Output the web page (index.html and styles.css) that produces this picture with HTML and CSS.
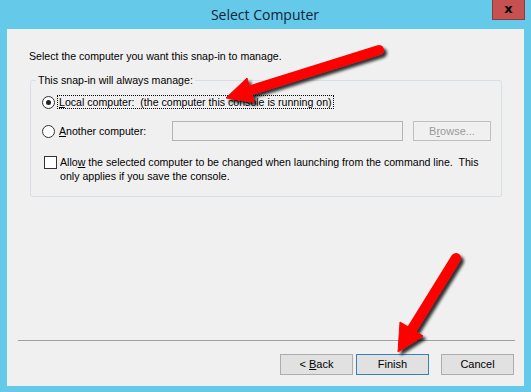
FILE: index.html
```html
<!DOCTYPE html>
<html lang="en">
<head>
    <meta charset="UTF-8">
    <title>Select Computer</title>
    <link rel="stylesheet" href="styles.css">
</head>
<body>
    <div class="window">
        <div class="titlebar">
            <div class="title">Select Computer</div>
            <div class="close">x</div>
        </div>

        <div class="client">
            <p class="intro">Select the computer you want this snap-in to manage.</p>

            <fieldset class="group">
                <legend>This snap-in will always manage:</legend>

                <div class="row row-local">
                    <span class="radio checked"></span>
                    <span class="focus"><u>L</u>ocal computer:&nbsp; (the computer this console is running on)</span>
                </div>

                <div class="row row-other">
                    <span class="radio"></span>
                    <span class="label"><u>A</u>nother computer:</span>
                    <span class="textbox"></span>
                    <span class="btn btn-disabled">B<u>r</u>owse...</span>
                </div>

                <div class="row row-check">
                    <span class="checkbox"></span>
                    <span class="check-text">Allo<u>w</u> the selected computer to be changed when launching from the command line.&nbsp; This<br>only applies if you save the console.</span>
                </div>
            </fieldset>

            <div class="footer">
                <div class="separator"></div>
                <div class="buttons">
                    <span class="btn">&lt; <u>B</u>ack</span>
                    <span class="btn btn-default">Finish</span>
                    <span class="btn btn-cancel">Cancel</span>
                </div>
            </div>
        </div>

        <!-- red arrows drawn over the dialog -->
        <svg class="arrows" width="531" height="392" viewBox="0 0 531 392">
            <defs>
                <filter id="shadow" x="-20%" y="-20%" width="140%" height="140%">
                    <feGaussianBlur in="SourceAlpha" stdDeviation="1.6"/>
                    <feOffset dx="3" dy="3" result="blur"/>
                    <feComponentTransfer><feFuncA type="linear" slope="0.8"/></feComponentTransfer>
                    <feMerge>
                        <feMergeNode/>
                        <feMergeNode in="SourceGraphic"/>
                    </feMerge>
                </filter>
            </defs>
            <g filter="url(#shadow)" fill="#ff0000" stroke="#ff0000">
                <line x1="379" y1="50" x2="248" y2="91" stroke-width="10" stroke-linecap="round"/>
                <polygon points="226,98 247,78 254,102" stroke-width="1" stroke-linejoin="round"/>
                <line x1="456" y1="258" x2="412" y2="329" stroke-width="10" stroke-linecap="round"/>
                <polygon points="398,352 400,322 423,336" stroke-width="1" stroke-linejoin="round"/>
            </g>
        </svg>
    </div>
</body>
</html>
```

FILE: styles.css
```css
body {
    margin: 0;
    padding: 0;
    background: #65c9ea;
    font-family: "Liberation Sans", Arial, sans-serif;
    font-size: 10.6px;
    color: #000;
}

.window {
    position: relative;
    width: 531px;
    height: 392px;
    background: #65c9ea;
    overflow: hidden;
}

.titlebar {
    display: flex;
    height: 29px;
    padding-left: 38px;
}

.title {
    flex: 1;
    text-align: center;
    font-family: "Open Sans", "Noto Sans", sans-serif;
    font-size: 14px;
    line-height: 30px;
    color: #10233a;
}

.close {
    width: 31px;
    height: 19px;
    margin-right: 6px;
    background: #c75050;
    border: 1px solid #8c3a3a;
    border-top: none;
    color: #000;
    font-family: "DejaVu Sans", sans-serif;
    font-weight: bold;
    font-size: 13px;
    line-height: 17px;
    text-align: center;
}

.client {
    display: flex;
    flex-direction: column;
    height: 357px;
    margin: 0 7px;
    background: #f0f0f0;
}

.intro {
    margin: 0;
    padding: 21px 0 0 22px;
    line-height: 13px;
}

.group {
    width: 472px;
    margin: 11px 0 0 23px;
    padding: 8px 0 11px 0;
    border: 1px solid #d5dfe5;
    border-radius: 3px;
    box-sizing: border-box;
    height: 123px;
}

.group legend {
    margin-left: 5px;
    padding: 0 2px;
    line-height: 13px;
}

.row {
    display: flex;
    align-items: center;
}

.row-local {
    height: 14px;
    padding-left: 11px;
}

.row-other {
    height: 20px;
    margin-top: 12px;
    padding-left: 11px;
}

.row-check {
    align-items: flex-start;
    margin-top: 14px;
    padding-left: 13px;
}

.radio {
    position: relative;
    width: 11px;
    height: 11px;
    border: 1px solid #333;
    border-radius: 50%;
    background: #fff;
    flex-shrink: 0;
}

.radio.checked::after {
    content: "";
    position: absolute;
    left: 3px;
    top: 3px;
    width: 5px;
    height: 5px;
    border-radius: 50%;
    background: #222;
}

.focus {
    margin-left: 3px;
    padding: 0 1px;
    line-height: 12px;
    outline: 1px dotted #000;
    outline-offset: 0;
}

.label {
    margin-left: 4px;
    width: 113px;
}

.textbox {
    width: 229px;
    height: 18px;
    border: 1px solid #b4b4b4;
    background: #f0f0f0;
}

.btn {
    display: inline-block;
    box-sizing: border-box;
    width: 73px;
    height: 21px;
    line-height: 19px;
    text-align: center;
    background: #e1e1e1;
    border: 1px solid #adadad;
    font-size: 11px;
}

.btn-disabled {
    width: 78px;
    height: 20px;
    line-height: 18px;
    margin-left: 10px;
    background: #f0f0f0;
    border-color: #bfbfbf;
    color: #9a9a9a;
}

.checkbox {
    width: 11px;
    height: 11px;
    margin-top: 1px;
    border: 1px solid #333;
    background: #fff;
    flex-shrink: 0;
}

.check-text {
    margin-left: 3px;
    line-height: 14px;
}

.footer {
    margin-top: auto;
    padding: 0 0 11px 11px;
}

.separator {
    width: 497px;
    height: 1px;
    background: #a0a0a0;
}

.buttons {
    display: flex;
    justify-content: flex-end;
    gap: 3px;
    margin-top: 13px;
    padding-right: 10px;
}

.btn-default {
    border-color: #3c7fb1;
}

.btn-cancel {
    margin-left: 9px;
}

.arrows {
    position: absolute;
    left: 0;
    top: 0;
    pointer-events: none;
}
```
